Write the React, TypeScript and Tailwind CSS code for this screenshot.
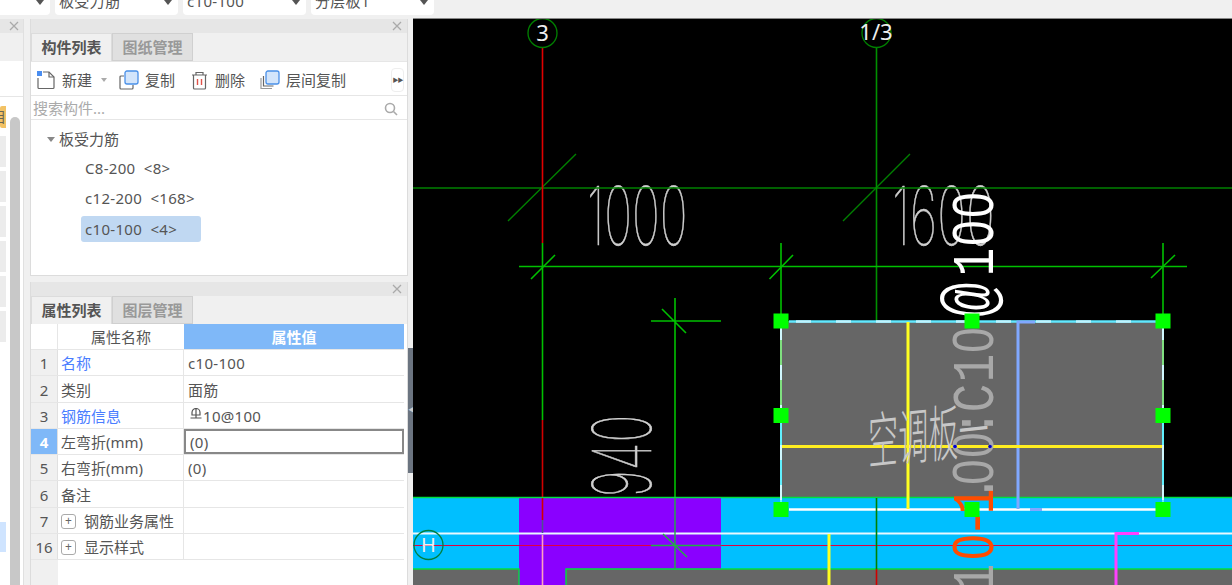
const rows = [
  { no: "1", name: "名称", value: "c10-100", link: true },
  { no: "2", name: "类别", value: "面筋" },
  { no: "3", name: "钢筋信息", value: "10@100", link: true, rebar: true },
  { no: "4", name: "左弯折(mm)", value: "(0)", active: true },
  { no: "5", name: "右弯折(mm)", value: "(0)" },
  { no: "6", name: "备注", value: "" },
  { no: "7", name: "钢筋业务属性", value: "", group: true },
  { no: "16", name: "显示样式", value: "", group: true },
];

const handles = [
  [781, 321], [972, 321], [1163, 321],
  [781, 415.5], [1163, 415.5],
  [781, 509.5], [972, 509.5], [1163, 509.5],
];

// rotated plan label, every char placed by its centre on the y axis
const planLabel: [string, number, string][] = [
  ["1", 578, "#a8a8a8"], ["0", 547, "#ff4c00"], ["-", 523, "#ff4c00"], ["1", 500, "#ff4c00"],
  [".", 488, "#a8a8a8"], ["0", 472, "#a8a8a8"], ["0", 445, "#a8a8a8"], [":", 423, "#a8a8a8"],
  ["C", 398, "#a8a8a8"], ["1", 368, "#a8a8a8"], ["0", 340, "#a8a8a8"],
  ["@", 300, "#ffffff"], ["1", 262, "#ffffff"], ["0", 233, "#ffffff"], ["0", 205, "#ffffff"],
];

function Dropdown({ label, className }: { label: string; className: string }) {
  return (
    <div className={`relative h-[28px] shrink-0 rounded-[4px] bg-white pl-[4px] pt-[4px] text-[15px] leading-[20px] tracking-[0.3px] text-[#555] ${className}`}>
      {label}
      <span className="absolute right-[6px] top-[13px] h-0 w-0 border-x-[4px] border-t-[5px] border-x-transparent border-t-[#555]" />
    </div>
  );
}

function TitleStrip() {
  return (
    <div className="flex h-[14px] items-center justify-end bg-[#e6e6e6] pr-[5px]">
      <svg width="10" height="10" viewBox="0 0 10 10" stroke="#aaa" strokeWidth="1.3">
        <path d="M1 1l8 8M9 1l-8 8" />
      </svg>
    </div>
  );
}

function Tabs({ first, second }: { first: string; second: string }) {
  return (
    <div className="flex h-[28px] bg-[#f0f0f0]">
      <div className="flex w-[81px] items-center justify-center border border-[#dcdcdc] border-b-0 text-[15px] font-bold text-[#555]">{first}</div>
      <div className="flex w-[81px] items-center justify-center border border-[#d0d0d0] bg-[#e0e0e0] text-[15px] font-bold text-[#999]">{second}</div>
    </div>
  );
}

function NewIcon() {
  return (
    <svg width="20" height="20" viewBox="0 0 20 20" fill="none">
      <path d="M2 8v9.5a1 1 0 001 1h14a1 1 0 001-1V7l-5-5H7" stroke="#666" strokeWidth="1.2" />
      <path d="M13 2v5h5" stroke="#666" strokeWidth="1.2" />
      <rect x="1" y="1" width="5" height="5" fill="#4a8df0" />
    </svg>
  );
}

function CopyIcon({ layered }: { layered?: boolean }) {
  return (
    <svg width="20" height="20" viewBox="0 0 20 20" fill="none">
      {layered && <path d="M1 8v10.5h11" stroke="#999" strokeWidth="1.2" />}
      <path d={layered ? "M3.5 6v10h10" : "M5 6H2a1 1 0 00-1 1v11a1 1 0 001 1h11a1 1 0 001-1v-3"} stroke="#666" strokeWidth="1.2" />
      <rect x="6" y="1" width="13" height="13" rx="2" fill="#d3e5fb" stroke="#4a90e8" strokeWidth="1.3" />
    </svg>
  );
}

function TrashIcon() {
  return (
    <svg width="17" height="19" viewBox="0 0 17 19" fill="none" stroke="#666" strokeWidth="1.2">
      <path d="M1 4h15M5 4V1.5h7V4M2.5 4v13a1 1 0 001 1h10a1 1 0 001-1V4" />
      <path d="M6.5 8v6M10.5 8v6" stroke="#e0534a" strokeWidth="1.4" />
    </svg>
  );
}

function PlusBox() {
  return (
    <span className="flex h-[15px] w-[15px] items-center justify-center rounded-[3px] border border-[#aaa] text-[12px] leading-none text-[#666]">+</span>
  );
}

function RebarMark() {
  return (
    <svg width="12" height="13" viewBox="0 0 12 13" fill="none" stroke="#555" strokeWidth="1.2" className="mb-[4px] ml-[2px] mr-[1px]">
      <path d="M2 7V4.5a4 4 0 018 0V7zM6 0.5V10M0.5 10h11" />
    </svg>
  );
}

function ComponentPanel() {
  return (
    <section className="flex h-[257px] flex-col border-x border-b border-[#dcdcdc] bg-white">
      <TitleStrip />
      <Tabs first="构件列表" second="图纸管理" />
      <div className="flex h-[35px] items-center border-y border-[#e6e6e6] pt-[3px] text-[15px] text-[#555]">
        <div className="ml-[5px] flex items-center gap-[6px]"><NewIcon />新建</div>
        <span className="ml-[9px] h-0 w-0 border-x-[3px] border-t-[4px] border-x-transparent border-t-[#aaa]" />
        <div className="ml-[12px] flex items-center gap-[6px]"><CopyIcon />复制</div>
        <div className="ml-[16px] flex items-center gap-[7px]"><TrashIcon />删除</div>
        <div className="ml-[15px] flex items-center gap-[6px]"><CopyIcon layered />层间复制</div>
        <div className="ml-auto mr-[3px] flex h-[24px] w-[13px] items-center justify-center rounded-[4px] border border-[#eee] text-[6px] tracking-[-1px] text-[#555]">▶▶</div>
      </div>
      <div className="flex h-[24px] items-center justify-between border-b border-[#e6e6e6] pl-[2px] pr-[9px] pt-[2px] text-[15px] text-[#aaa]">
        搜索构件...
        <svg width="14" height="14" viewBox="0 0 14 14" fill="none" stroke="#aaa" strokeWidth="1.6">
          <circle cx="6" cy="6" r="4.5" />
          <path d="M9.5 9.5L13 13" />
        </svg>
      </div>
      <div className="flex flex-1 flex-col text-[15px] tracking-[0.3px] text-[#555]">
        <div className="mt-[8px] flex h-[22px] items-center pl-[16px] tracking-normal">
          <span className="mr-[4px] h-0 w-0 border-x-[4px] border-t-[5px] border-x-transparent border-t-[#888]" />
          板受力筋
        </div>
        <div className="mt-[7px] flex h-[22px] items-center pl-[54px]">C8-200&nbsp; &lt;8&gt;</div>
        <div className="mt-[8px] flex h-[22px] items-center pl-[54px]">c12-200&nbsp; &lt;168&gt;</div>
        <div className="ml-[50px] mt-[7px] flex h-[26px] w-[120px] items-center rounded-[3px] bg-[#c0d8f2] pl-[4px]">c10-100&nbsp; &lt;4&gt;</div>
      </div>
    </section>
  );
}

function PropertyPanel() {
  return (
    <section className="flex flex-1 flex-col border-x border-[#dcdcdc] bg-white">
      <TitleStrip />
      <Tabs first="属性列表" second="图层管理" />
      <div className="flex flex-1 flex-col bg-white pr-[3px] text-[15px] text-[#555]">
        <div className="flex h-[26px] border-b border-[#e6e6e6]">
          <div className="w-[27px] border-r border-[#e6e6e6]" />
          <div className="flex w-[126px] items-center justify-center pt-[2px]">属性名称</div>
          <div className="flex flex-1 items-center justify-center bg-[#7fb8f8] pt-[2px] font-bold text-white">属性值</div>
        </div>
        {rows.map((row) => (
          <div key={row.no} className="flex h-[26.25px] border-b border-[#e6e6e6]">
            <div className={`flex w-[27px] items-center justify-center border-r border-[#e0e0e0] pt-[2px] ${row.active ? "bg-[#7fb8f8] font-bold text-white" : "bg-[#f0f0f0]"}`}>{row.no}</div>
            <div className={`flex w-[126px] items-center gap-[8px] border-r border-[#e6e6e6] pl-[3px] pt-[2px] ${row.link ? "text-[#4a7dff]" : ""}`}>
              {row.group && <PlusBox />}
              {row.name}
            </div>
            <div className={`flex flex-1 items-center pl-[4px] pt-[2px] tracking-[0.3px] ${row.active ? "border-2 border-[#888] pl-[3px]" : ""}`}>
              {row.rebar && <RebarMark />}
              {row.value}
            </div>
          </div>
        ))}
        <div className="w-[27px] flex-1 bg-[#f0f0f0]" />
      </div>
    </section>
  );
}

function LeftStrip() {
  return (
    <aside className="relative flex w-[24px] shrink-0 border-r border-[#e0e0e0] bg-white">
      <div className="flex w-full flex-col">
        <div className="flex h-[14px] items-center justify-end bg-[#e6e6e6] pr-[4px]">
          <svg width="10" height="10" viewBox="0 0 10 10" stroke="#aaa" strokeWidth="1.3">
            <path d="M1 1l8 8M9 1l-8 8" />
          </svg>
        </div>
        <div className="h-[28px] bg-[#f0f0f0]" />
        <div className="h-[36px] border-b border-[#e6e6e6]" />
        <div className="mt-[9px] h-[22px] w-[6px] overflow-hidden rounded-l-[2px] bg-[#f2c265] text-[14px] leading-[22px] text-[#665]"><span className="-ml-[8px] block">目</span></div>
        <div className="mt-[8px] flex w-[6px] flex-col gap-[4px]">
          <div className="h-[31px] bg-[#ececec]" />
          <div className="h-[31px] bg-[#ececec]" />
          <div className="h-[31px] bg-[#ececec]" />
          <div className="h-[31px] bg-[#ececec]" />
          <div className="h-[31px] bg-[#ececec]" />
          <div className="h-[31px] bg-[#ececec]" />
        </div>
        <div className="mt-[180px] h-[30px] w-[6px] bg-[#cfe4ff]" />
      </div>
      <div className="absolute bottom-0 left-[10px] top-[98px] w-[10px] rounded-t-[5px] bg-[#c8c8c8]" />
    </aside>
  );
}

function Drawing() {
  return (
    <svg viewBox="413 19 819 566" className="block h-full w-full" fontFamily="Inter, sans-serif">
      <rect x="413" y="19" width="819" height="566" fill="#000" />

      {/* dimension texts sit under the slab bands */}
      <g fill="#cfcfcf" stroke="#cfcfcf" strokeWidth="0.6" fontWeight="100" fontSize="81">
        <text transform="translate(587,245) scale(0.58,1)">1000</text>
        <text transform="translate(892,245) scale(0.6,1)">1600</text>
        <text transform="translate(651,497) rotate(-90) scale(0.58,1)">940</text>
      </g>

      {/* axis lines */}
      <path d="M413 188H1232" stroke="#008000" strokeWidth="1.4" />
      <path d="M508 221L576 154M843 221L910 154" stroke="#008000" strokeWidth="1.4" />
      <path d="M542.5 48V243" stroke="#e00000" strokeWidth="1.6" />
      <path d="M542.5 243V420" stroke="#00c000" strokeWidth="1.6" />
      <path d="M542.5 420V498" stroke="#d00000" strokeWidth="1.6" />
      <path d="M876.5 48V569" stroke="#009000" strokeWidth="1.6" />
      <g fill="none" stroke="#008000" strokeWidth="1.3">
        <circle cx="542.5" cy="33" r="14.5" />
        <circle cx="876.5" cy="33" r="14.5" />
      </g>
      <g fill="#eee" fontSize="22" textAnchor="middle" fontFamily="Noto Sans, sans-serif">
        <text x="542.5" y="41">3</text>
        <text x="876" y="40" fontSize="22">1/3</text>
      </g>

      {/* dimension lines */}
      <g stroke="#00c000" strokeWidth="1.6">
        <path d="M519 266.5H1187" />
        <path d="M781 243V321M1163 243V321" />
        <path d="M531 279L555 255M769.5 279L793 255M1151 278L1175 255" />
        <path d="M651 321H721M675 298V498M662 309L686 333" />
      </g>

      {/* slab */}
      <rect x="781" y="321" width="382" height="177" fill="#666" />
      <rect x="413" y="498" width="819" height="71" fill="#00bfff" />
      <rect x="519" y="498" width="202" height="71" fill="#8a00ff" />
      <rect x="413" y="569" width="819" height="16" fill="#666" />
      <rect x="519" y="569" width="47" height="16" fill="#8a00ff" />
      <path d="M413 497.5H1232M413 569H519V585M566 585V569H1232" fill="none" stroke="#00e040" strokeWidth="1.4" />
      <path d="M781 321V505M1163 321V505" stroke="#60f0ff" strokeWidth="2" />
      <path d="M781 321V410M1163 321V410" stroke="#80e080" strokeWidth="2" />
      <path d="M781 325V505M1163 325V505" stroke="#d0f8ff" strokeWidth="2" strokeDasharray="15 25" />
      <path d="M789 321.5H1156" stroke="#60e8ff" strokeWidth="2.4" />
      <path d="M796 321.5H1156" stroke="#c0f4ff" strokeWidth="2.4" strokeDasharray="15 25" />
      <path d="M789 509.5H1156" stroke="#fff" strokeWidth="2.4" />
      <path d="M908 322V509" stroke="#ffff20" strokeWidth="3" />
      <path d="M1018 509V322H1035M1030 509.5H1042" fill="none" stroke="#80a8ff" strokeWidth="3" />
      <path d="M782 446.5H1162" stroke="#ffee20" strokeWidth="3" />

      <path d="M413 533.5H1232" stroke="#e8f8ff" strokeWidth="2" />
      <path d="M413 545.5H1232" stroke="#e00040" strokeWidth="1.2" />
      <path d="M651 545.5H721M675 498V569M663 534L687 557" stroke="#20b040" strokeWidth="1.4" />
      <path d="M542.5 498V520" stroke="#d00000" strokeWidth="1.6" />
      <path d="M542.5 520V533" stroke="#505090" strokeWidth="1.6" />
      <path d="M542.5 535V585" stroke="#ffa0c0" strokeWidth="1.6" />
      <path d="M876.5 498V569" stroke="#008000" strokeWidth="1.6" />
      <path d="M876.5 569V585" stroke="#d00000" strokeWidth="1.6" />
      <path d="M829 534V585" stroke="#ffff20" strokeWidth="3" />
      <path d="M1139 533.5H1116V585" fill="none" stroke="#ff40ff" strokeWidth="3" />
      <circle cx="428.5" cy="545" r="14.5" fill="none" stroke="#008040" strokeWidth="1.3" />
      <text x="428.5" y="552" fontSize="20" fill="#eee" textAnchor="middle" fontFamily="Noto Sans, sans-serif">H</text>

      {/* slab name and rebar label */}
      <text
        transform="translate(868,464) skewY(-6) scale(0.52,1.06)"
        fill="#c8c8c8"
        fontSize="58"
        fontWeight="300"
        fontFamily="Noto Sans CJK SC, sans-serif"
      >
        空调板一
      </text>
      <text transform="translate(993,0) rotate(-90) scale(0.8,1)" fontFamily="Liberation Mono, monospace" fontSize="60" textAnchor="middle">
        {planLabel.map(([ch, y, color], i) => (
          <tspan
            key={i}
            x={-y / 0.8}
            y="0"
            fill={color}
            fontFamily={ch === "0" ? "Liberation Sans, sans-serif" : undefined}
            fontSize={ch === "0" ? 57 : ch === "@" ? 72 : undefined}
          >
            {ch}
          </tspan>
        ))}
      </text>
      <circle cx="955" cy="446.5" r="1.8" fill="#0000d0" />
      <circle cx="990" cy="446.5" r="1.8" fill="#0000d0" />

      {handles.map(([x, y]) => (
        <rect key={`${x}-${y}`} x={x - 7.5} y={y - 7.5} width="15" height="15" fill="#00ff00" />
      ))}
    </svg>
  );
}

export default function App() {
  return (
    <div className="flex h-[585px] w-[1232px] flex-col overflow-hidden bg-[#f0f0f0] font-['Noto_Sans','Noto_Sans_CJK_SC',sans-serif]">
      <header className="flex h-[19px] shrink-0 gap-[4px] overflow-hidden bg-[#f0f0f0]">
        <div className="-mt-[13px] flex gap-[5px]">
          <Dropdown label="" className="w-[50px] rounded-l-none" />
          <Dropdown label="板受力筋" className="w-[123px]" />
          <Dropdown label="c10-100" className="w-[123px]" />
          <Dropdown label="分层板1" className="w-[123px]" />
        </div>
      </header>
      <main className="flex min-h-0 flex-1">
        <LeftStrip />
        <div className="flex w-[6px] shrink-0 bg-[#f0f0f0]" />
        <div className="flex w-[378px] shrink-0 flex-col">
          <ComponentPanel />
          <div className="h-[6px] shrink-0 bg-[#f0f0f0]" />
          <PropertyPanel />
        </div>
        <div className="w-[5px] shrink-0 bg-[#f0f0f0] pt-[329px]">
          <div className="flex h-[125px] items-center bg-[#6b7480] text-[7px] text-[#ccc]">◀</div>
        </div>
        <div className="-mt-px min-w-0 flex-1 border-t border-[#888]">
          <Drawing />
        </div>
      </main>
    </div>
  );
}
